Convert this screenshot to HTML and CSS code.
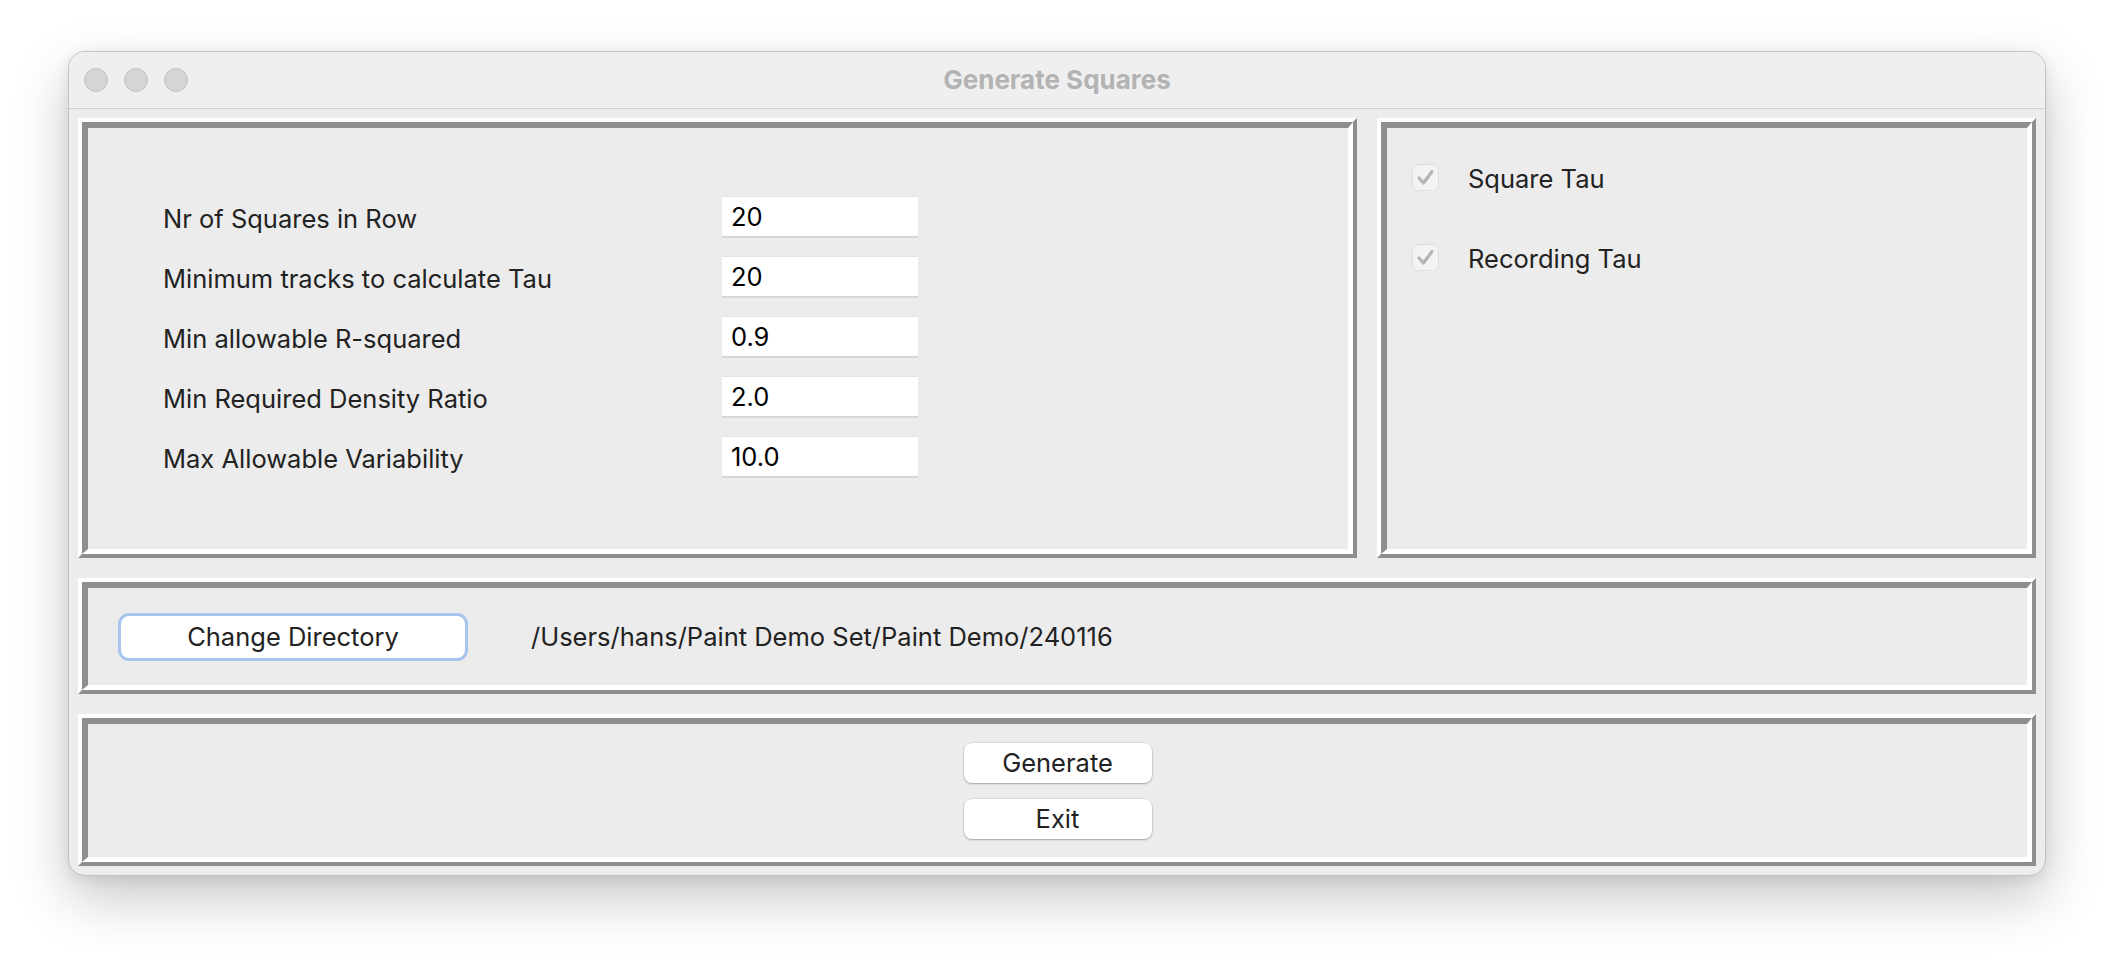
FILE: index.html
```html
<!DOCTYPE html>
<html lang="en">
<head>
<meta charset="utf-8">
<title>Generate Squares</title>
<link rel="stylesheet" href="styles.css">
</head>
<body>
<div class="window">
  <div class="titlebar">
    <div class="lights">
      <span class="light"></span>
      <span class="light"></span>
      <span class="light"></span>
    </div>
    <div class="title">Generate Squares</div>
    <div></div>
  </div>
  <div class="content">
    <div class="top-row">
      <div class="panel panel-params">
        <div class="panel-inner params">
          <div class="label">Nr of Squares in Row</div><div class="entry">20</div>
          <div class="label">Minimum tracks to calculate Tau</div><div class="entry">20</div>
          <div class="label">Min allowable R-squared</div><div class="entry">0.9</div>
          <div class="label">Min Required Density Ratio</div><div class="entry">2.0</div>
          <div class="label">Max Allowable Variability</div><div class="entry">10.0</div>
        </div>
      </div>
      <div class="panel panel-options">
        <div class="panel-inner options">
          <div class="check-row">
            <span class="checkbox"><svg viewBox="0 0 27 27" width="27" height="27"><path d="M7 14 L11.5 19 L20 7.5" fill="none" stroke="#b5b5b5" stroke-width="3.2" stroke-linecap="round" stroke-linejoin="round"/></svg></span>
            <span class="check-label">Square Tau</span>
          </div>
          <div class="check-row">
            <span class="checkbox"><svg viewBox="0 0 27 27" width="27" height="27"><path d="M7 14 L11.5 19 L20 7.5" fill="none" stroke="#b5b5b5" stroke-width="3.2" stroke-linecap="round" stroke-linejoin="round"/></svg></span>
            <span class="check-label">Recording Tau</span>
          </div>
        </div>
      </div>
    </div>
    <div class="panel panel-dir">
      <div class="panel-inner dir">
        <button class="btn btn-focus">Change Directory</button>
        <span class="path">/Users/hans/Paint Demo Set/Paint Demo/240116</span>
      </div>
    </div>
    <div class="panel panel-actions">
      <div class="panel-inner actions">
        <button class="btn btn-small">Generate</button>
        <button class="btn btn-small">Exit</button>
      </div>
    </div>
  </div>
</div>
</body>
</html>
```
FILE: styles.css
```css
* { box-sizing: border-box; }

html { background: #ffffff; }

body {
  margin: 0;
  min-height: 960px;
  padding: 51px 0 0 68px;
  background: #ffffff;
  font-family: Inter, "Noto Sans", "Liberation Sans", sans-serif;
  color: #222222;
}

.window {
  width: 1978px;
  height: 825px;
  border: 1px solid #c2c2c2;
  border-radius: 17px;
  background: #ececec;
  box-shadow: 0 22px 55px rgba(0, 0, 0, 0.22), 0 4px 14px rgba(0, 0, 0, 0.08);
  display: flex;
  flex-direction: column;
  overflow: hidden;
}

.titlebar {
  flex: none;
  height: 57px;
  background: #efefef;
  border-bottom: 1px solid #d0d0d0;
  display: grid;
  grid-template-columns: 1fr auto 1fr;
  align-items: center;
}

.lights {
  display: flex;
  gap: 16px;
  margin-left: 15px;
}

.light {
  width: 24px;
  height: 24px;
  border-radius: 50%;
  background: #d6d6d6;
  border: 1px solid #c2c2c2;
}

.title {
  font-size: 26px;
  font-weight: 700;
  color: #b3b3b3;
  padding-bottom: 1px;
}

.content {
  flex: 1;
  padding: 9px;
  display: flex;
  flex-direction: column;
  gap: 20px;
}

.top-row {
  flex: none;
  height: 440px;
  display: flex;
  gap: 20px;
}

.panel {
  display: flex;
  border: 4px solid;
  border-color: #ffffff #8e8e8e #8e8e8e #ffffff;
}

.panel-inner {
  flex: 1;
  border-style: solid;
  border-width: 6px 5px 5px 6px;
  border-color: #8e8e8e #ffffff #ffffff #8e8e8e;
}

.panel-params { flex: none; width: 1279px; }
.panel-options { flex: 1; }
.panel-dir { flex: none; height: 116px; }
.panel-actions { flex: 1; }

.params {
  display: grid;
  grid-template-columns: 559px 196px;
  grid-auto-rows: 42px;
  row-gap: 18px;
  align-content: start;
  align-items: center;
  padding: 68px 0 0 75px;
}

.label {
  font-size: 25.5px;
  color: #222222;
  padding-top: 2px;
}

.entry {
  height: 42px;
  background: #ffffff;
  border-top: 1px solid #e4e4e4;
  border-bottom: 2px solid #d6d6d6;
  padding-left: 9px;
  font-size: 25.5px;
  line-height: 39px;
  color: #000000;
}

.options {
  display: flex;
  flex-direction: column;
  gap: 53px;
  padding: 36px 0 0 25px;
}

.check-row {
  display: flex;
  align-items: center;
  gap: 29px;
  height: 27px;
}

.checkbox {
  width: 27px;
  height: 27px;
  border-radius: 6px;
  background: #f3f3f3;
  border: 1px solid #dedede;
  display: flex;
  align-items: center;
  justify-content: center;
  overflow: hidden;
}

.checkbox svg { display: block; flex: none; }

.check-label {
  font-size: 25.5px;
  color: #222222;
  padding-top: 2px;
}

.dir {
  display: flex;
  align-items: center;
  gap: 63px;
  padding-left: 30px;
}

.btn {
  font-family: inherit;
  font-size: 25.5px;
  color: #222222;
  background: #ffffff;
  padding: 0;
  margin: 0;
  cursor: default;
}

.btn-focus {
  width: 350px;
  height: 48px;
  border: 3px solid #a6c4ee;
  border-radius: 11px;
}

.path {
  font-size: 25.5px;
  color: #222222;
}

.actions {
  display: flex;
  flex-direction: column;
  align-items: center;
  justify-content: center;
  gap: 16px;
}

.btn-small {
  width: 188px;
  height: 40px;
  border: none;
  border-radius: 8px;
  box-shadow: 0 0 0 1px rgba(0, 0, 0, 0.06), 0 1px 2px rgba(0, 0, 0, 0.25);
}
```
